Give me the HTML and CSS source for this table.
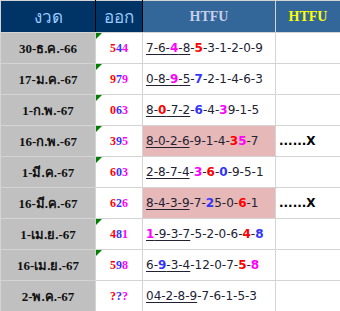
FILE: index.html
```html
<!DOCTYPE html>
<html lang="th">
<head>
    <meta charset="UTF-8">
    <meta name="viewport" content="width=device-width, initial-scale=1.0">
    <title>HTFU</title>
    <link rel="stylesheet" href="styles.css">
</head>
<body>
    <table class="lotto">
        <tr class="head">
            <th class="h-date">งวด</th>
            <th class="h-out">ออก</th>
            <th class="h-htfu">HTFU</th>
            <th class="h-note">HTFU</th>
        </tr>
        <tr>
            <td class="date">30-ธ.ค.-66</td>
            <td class="out mark"><span class="r">5</span><span class="b">4</span><span class="m">4</span></td>
            <td class="htfu"><u>7-6-<b class="m">4</b>-8</u>-<b class="r">5</b>-3-1-2-0-9</td>
            <td class="note"></td>
        </tr>
        <tr>
            <td class="date">17-ม.ค.-67</td>
            <td class="out mark"><span class="r">9</span><span class="b">7</span><span class="m">9</span></td>
            <td class="htfu"><u>0-8-<b class="m">9</b>-5</u>-<b class="b">7</b>-2-1-4-6-3</td>
            <td class="note"></td>
        </tr>
        <tr>
            <td class="date">1-ก.พ.-67</td>
            <td class="out mark"><span class="r">0</span><span class="b">6</span><span class="m">3</span></td>
            <td class="htfu"><u>8-<b class="r">0</b>-7-2</u>-<b class="b">6</b>-4-<b class="m">3</b>9-1-5</td>
            <td class="note"></td>
        </tr>
        <tr class="hit">
            <td class="date">16-ก.พ.-67</td>
            <td class="out mark"><span class="r">3</span><span class="b">9</span><span class="m">5</span></td>
            <td class="htfu"><u>8-0-2-6</u>-9-1-4-<b class="r">3</b><b class="m">5</b>-7</td>
            <td class="note">......X</td>
        </tr>
        <tr>
            <td class="date">1-มี.ค.-67</td>
            <td class="out mark"><span class="r">6</span><span class="b">0</span><span class="m">3</span></td>
            <td class="htfu"><u>2-8-7-4</u>-<b class="m">3</b>-<b class="r">6</b>-<b class="b">0</b>-9-5-1</td>
            <td class="note"></td>
        </tr>
        <tr class="hit">
            <td class="date">16-มี.ค.-67</td>
            <td class="out"><span class="r">6</span><span class="b">2</span><span class="m">6</span></td>
            <td class="htfu"><u>8-4-3-9</u>-7-<b class="b">2</b>5-0-<b class="r">6</b>-1</td>
            <td class="note">......X</td>
        </tr>
        <tr>
            <td class="date">1-เม.ย.-67</td>
            <td class="out mark"><span class="r">4</span><span class="b">8</span><span class="m">1</span></td>
            <td class="htfu"><u><b class="m">1</b>-9-3-7</u>-5-2-0-6-<b class="r">4</b>-<b class="b">8</b></td>
            <td class="note"></td>
        </tr>
        <tr>
            <td class="date">16-เม.ย.-67</td>
            <td class="out mark"><span class="r">5</span><span class="b">9</span><span class="m">8</span></td>
            <td class="htfu"><u>6-<b class="b">9</b>-3-4</u>-12-0-7-<b class="r">5</b>-<b class="m">8</b></td>
            <td class="note"></td>
        </tr>
        <tr class="last">
            <td class="date">2-พ.ค.-67</td>
            <td class="out"><span class="r">?</span><span class="b">?</span><span class="m">?</span></td>
            <td class="htfu"><u>04-2-8-9</u>-7-6-1-5-3</td>
            <td class="note"></td>
        </tr>
    </table>
</body>
</html>
```

FILE: styles.css
```css
* {
    margin: 0;
    padding: 0;
    box-sizing: border-box;
}

body {
    background: #fff;
    font-family: "Liberation Serif", serif;
}

.lotto {
    width: 340px;
    border-collapse: collapse;
    table-layout: fixed;
}

.lotto th,
.lotto td {
    border: 1px solid #d4d4d4;
    vertical-align: middle;
}

/* หัวตาราง */
.head th {
    height: 32px;
    font-weight: bold;
}

.h-date,
.h-out {
    width: 95px;
    background: #003366;
    color: #99ccff;
    font-family: "Noto Sans", "DejaVu Sans", sans-serif;
    font-size: 17px;
    font-weight: normal !important;
    border-color: #003366;
    border-right: 1px solid #000 !important;
}

.h-out {
    width: 47px;
}

.h-htfu,
.h-note {
    background: #336699;
    border-color: #336699;
    font-family: "Liberation Serif", serif;
    font-size: 14px;
}

.h-htfu {
    width: 133px;
    color: #c8d0e8;
}

.h-note {
    width: 65px;
    color: #ffff00;
    border-right: 1px solid #1f3f6f;
}

/* แถวข้อมูล */
.lotto td {
    height: 31px;
}

.date {
    background: #c0c0c0;
    border-color: #c0c0c0;
    text-align: center;
    font-weight: bold;
    font-size: 13px;
    color: #111;
}

.out {
    position: relative;
    text-align: center;
    font-weight: bold;
    font-size: 12px;
}

.mark::before {
    content: '';
    position: absolute;
    top: 0;
    left: 0;
    border-top: 6px solid #008000;
    border-right: 6px solid transparent;
}

.htfu {
    padding-left: 3px;
    font-family: "DejaVu Sans", sans-serif;
    font-size: 12px;
    color: #222233;
    white-space: nowrap;
}

.htfu u {
    text-decoration-thickness: 1px;
    text-underline-offset: 2px;
}

.note {
    padding-left: 3px;
    font-family: "DejaVu Sans", sans-serif;
    font-weight: bold;
    font-size: 12px;
    color: #000;
}

.hit .htfu {
    background: #e6b8b7;
}

.last .htfu {
    border-bottom: 1px solid #31849b;
}

.last .note {
    border-bottom: 1px solid #e6b8b7;
}

.r {
    color: #ff0000;
}

.b {
    color: #3333ff;
}

.m {
    color: #ff00ff;
}
```
